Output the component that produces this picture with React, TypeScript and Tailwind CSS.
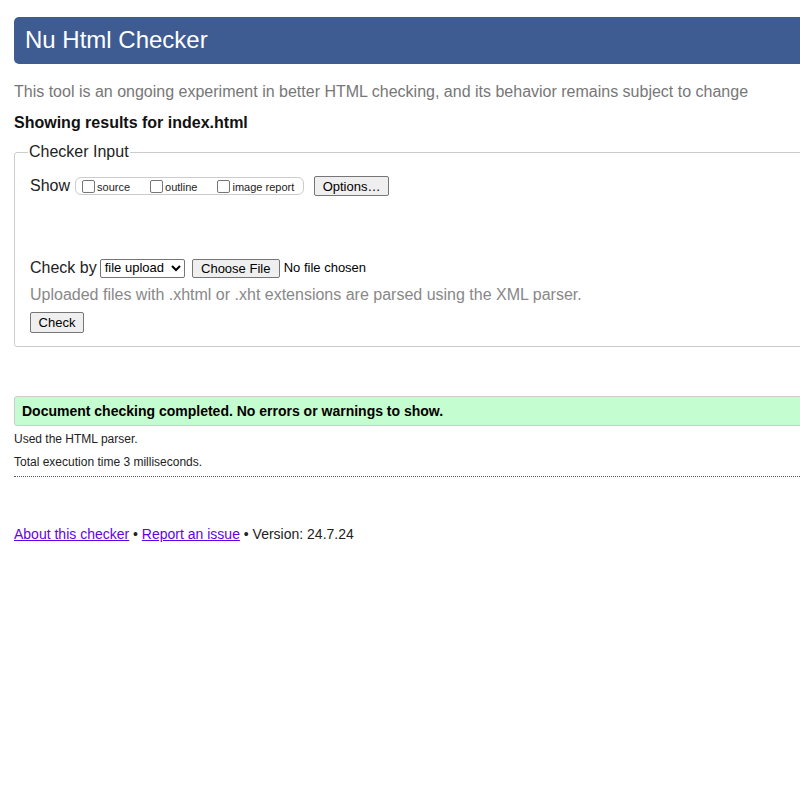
import React from 'react';

const font = { fontFamily: '"Liberation Sans", Arial, sans-serif' };

// Small native-looking checkbox with label
const Check = ({ label, className = '' }: { label: string; className?: string }) => (
  <label className={`flex items-center gap-[2px] ${className}`}>
    <span className="inline-block w-[13px] h-[13px] border border-[#767676] rounded-[2px] bg-white" />
    <span className="text-[11px] leading-none text-[#222] mt-[2px]">{label}</span>
  </label>
);

const Btn = ({ children, className = '' }: { children: React.ReactNode; className?: string }) => (
  <button className={`border border-[#767676] rounded-[2px] bg-[#efefef] text-[13px] leading-none text-black ${className}`}>
    {children}
  </button>
);

export default function App() {
  return (
    <div className="w-[800px] h-[800px] overflow-hidden bg-white" style={font}>
      <div className="w-[1000px] pl-[14px] pt-[17px]">
        {/* header */}
        <header className="h-[47px] bg-[#3e5b92] rounded-l-[5px] flex items-center pl-[11px]">
          <h1 className="text-[24px] text-white leading-none -mt-[2px]">Nu Html Checker</h1>
        </header>

        <p className="mt-[20px] text-[16px] leading-none text-[#777]">
          This tool is an ongoing experiment in better HTML checking, and its behavior remains subject to change
        </p>
        <p className="mt-[15px] text-[16px] leading-none font-bold text-[#111]">Showing results for index.html</p>

        {/* checker input */}
        <fieldset className="mt-[13px] h-[203px] border border-[#ccc] rounded-[3px] px-[15px] relative">
          <legend className="text-[16px] text-[#222] leading-none px-[1px] ml-[-2px]">Checker Input</legend>
          <div className="flex items-center mt-[16px] h-[20px]">
            <span className="text-[16px] text-[#222] mr-[5px]">Show</span>
            <div className="flex items-center h-[18px] w-[229px] border border-[#ccc] rounded-[6px] pl-[6px]">
              <Check label="source" />
              <Check label="outline" className="ml-[20px]" />
              <Check label="image report" className="ml-[20px]" />
            </div>
            <Btn className="ml-[10px] h-[20px] w-[75px]">Options…</Btn>
          </div>

          <div className="flex items-center mt-[62px] h-[20px]">
            <span className="text-[16px] text-[#222] mr-[3px]">Check by</span>
            <div className="flex items-center justify-between h-[19px] w-[85px] border border-[#767676] rounded-[2px] pl-[4px] pr-[3px] text-[13px] text-black">
              file upload
              <svg width="10" height="8" viewBox="0 0 10 8">
                <path d="M1 2 L5 6 L9 2" stroke="#000" strokeWidth="2" fill="none" />
              </svg>
            </div>
            <Btn className="ml-[7px] h-[19px] w-[88px]">Choose File</Btn>
            <span className="ml-[4px] text-[13px] text-black">No file chosen</span>
          </div>

          <p className="mt-[9px] text-[16px] leading-none text-[#888]">
            Uploaded files with .xhtml or .xht extensions are parsed using the XML parser.
          </p>
          <Btn className="mt-[9px] h-[21px] w-[54px]">Check</Btn>
        </fieldset>

        {/* result */}
        <div className="mt-[49px] h-[30px] bg-[#c4fdd0] border border-[#ccc] rounded-l-[3px] flex items-center pl-[7px]">
          <span className="text-[14px] font-bold text-black">Document checking completed. No errors or warnings to show.</span>
        </div>
        <p className="mt-[6px] text-[12px] leading-[15px] text-[#222]">Used the HTML parser.</p>
        <p className="mt-[8px] text-[12px] leading-[15px] text-[#222]">Total execution time 3 milliseconds.</p>
        <div className="mt-[6px] border-t border-dotted border-[#555]" />

        {/* footer */}
        <p className="mt-[47px] text-[14px] text-[#222]">
          <a className="text-[#6200ea] underline">About this checker</a> •{' '}
          <a className="text-[#6200ea] underline">Report an issue</a> • Version: 24.7.24
        </p>
      </div>
    </div>
  );
}
